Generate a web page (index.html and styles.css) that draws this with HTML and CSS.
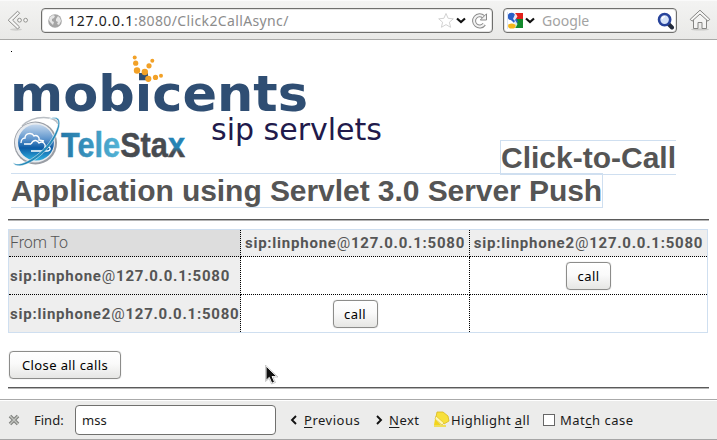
FILE: index.html
```html
<!DOCTYPE html>
<html lang="en">
<head>
<meta charset="utf-8">
<title>Click2CallAsync</title>
<link rel="stylesheet" href="styles.css">
</head>
<body>
<header class="toolbar">
  <svg class="back" width="22" height="22" viewBox="0 0 22 22">
    <ellipse cx="9" cy="19.5" rx="6" ry="1.2" fill="#cfcfcd"/>
    <path d="M10.6 1.2 12.6 3.2 5.6 10.2 12.6 17 10.6 19 1.2 10.2Z" fill="#f6f6f5" stroke="#8c8c8a" stroke-linejoin="round"/>
    <circle cx="12.5" cy="10.2" r="1.9" fill="#f6f6f5" stroke="#92928f"/>
    <circle cx="18.6" cy="10.2" r="1.9" fill="#f6f6f5" stroke="#92928f"/>
  </svg>
  <div class="field address">
    <svg width="14" height="14" viewBox="0 0 14 14">
      <circle cx="7" cy="7" r="6.8" fill="#a5a5a5"/>
      <path d="M2 3 5 1 7 2 6 4 4 5 4 7 6 8 5 11 2 8 1 6ZM8 5 10 2 12 4 13 7 11 11 9 10 10 8 8 7Z" fill="#e6e6e6"/>
    </svg>
    <span class="url"><b>127.0.0.1</b>:8080/Click2CallAsync/</span>
    <svg class="tools" width="52" height="18" viewBox="0 0 52 18">
      <path d="M8 1.5 10.1 6.3 15.3 6.8 11.4 10.2 12.6 15.3 8 12.6 3.4 15.3 4.6 10.2 .7 6.8 5.9 6.3Z" fill="#fff" stroke="#d2d2d2"/>
      <path d="M19 6.5 23 10 27 6.5" fill="none" stroke="#111" stroke-width="2.2"/>
      <path d="M46.2 12.2A5.6 5.6 0 1 1 45.5 4.8" fill="none" stroke="#8b8b8b" stroke-width="4"/>
      <path d="M46.2 12.2A5.6 5.6 0 1 1 45.5 4.8" fill="none" stroke="#f3f3f3" stroke-width="2"/>
      <path d="M48.5 1.8V8H42.3Z" fill="#f3f3f3" stroke="#8b8b8b"/>
    </svg>
  </div>
  <div class="field search">
    <svg width="30" height="18" viewBox="0 0 30 18">
      <path d="M8 1h8v6H8Z" fill="#e1201b"/>
      <path d="M8 7h8v9H8Z" fill="#12892c"/>
      <circle cx="4.5" cy="4.5" r="3.8" fill="#2b5fc6"/>
      <path d="M0 0h1v17H0Z" fill="#dbe5f6"/>
      <path d="M4 8 9 6 11 10 8 12Z" fill="#2b5fc6"/>
      <path d="M8.500 1 10.500 4.500 8 8 10.500 12 8.500 16 6 12 8 9 6 7Z" fill="#fff" opacity=".85"/>
      <ellipse cx="4.8" cy="14" rx="3.8" ry="2.6" fill="#f4b61b"/>
      <path d="M19 6.500 23 10 27 6.500" fill="none" stroke="#111" stroke-width="2.200"/>
    </svg>
    <span class="hint">Google</span>
    <svg class="lens" width="18" height="18" viewBox="0 0 18 18">
      <path d="M11 11.5 15 15.5" stroke="#222a3a" stroke-width="4" stroke-linecap="round"/>
      <circle cx="7.6" cy="7.6" r="5.6" fill="#d5e2f8" stroke="#27439b" stroke-width="2.6"/>
      <path d="M5 7A3 3 0 0 1 8 4.6" fill="none" stroke="#fff" stroke-width="1.4"/>
    </svg>
  </div>
  <svg class="home" width="22" height="22" viewBox="0 0 22 22">
    <ellipse cx="11" cy="20.5" rx="9" ry="1" fill="#c9c9c7"/>
    <path d="M4.5 10V19.5H9V13.5H13V19.5H17.5V10L11 4Z" fill="#f4f4f3" stroke="#858583"/>
    <path d="M11 1.2 20.8 10.3 19 12.2 11 5 3 12.2 1.2 10.3Z" fill="#f6f6f5" stroke="#858583" stroke-linejoin="round"/>
  </svg>
</header>

<main class="page">
  <h1 class="title"><svg class="logos" width="489" height="123" viewBox="11 45 489 123">
      <defs>
        <linearGradient id="tele" gradientUnits="userSpaceOnUse" x1="61" y1="0" x2="121" y2="0"><stop offset="0" stop-color="#2377a8"/><stop offset="1" stop-color="#54b4d6"/></linearGradient>
        <linearGradient id="ex" gradientUnits="userSpaceOnUse" x1="0" y1="138" x2="0" y2="157"><stop offset=".5" stop-color="#2583b4"/><stop offset=".75" stop-color="#474b50"/></linearGradient>
        <linearGradient id="globe" x1="0" y1="0" x2="0" y2="1"><stop offset="0" stop-color="#c5d8ed"/><stop offset=".4" stop-color="#6096cd"/><stop offset=".65" stop-color="#0c5ca6"/><stop offset="1" stop-color="#30b0df"/></linearGradient>
      </defs>
      <path d="M11 51h1v1h-1Z" fill="#000"/>
      <text class="mobicents" x="10" y="111" textLength="298" lengthAdjust="spacingAndGlyphs">mobicents</text>
      <g fill="#f2a127">
        <circle cx="134.7" cy="57.5" r="2"/><circle cx="135.7" cy="63.2" r="2.6"/><circle cx="137" cy="70.5" r="3.2"/>
        <circle cx="152.3" cy="60.8" r="2"/><circle cx="149" cy="65.8" r="2.6"/><circle cx="144.8" cy="72" r="3.2"/>
        <circle cx="148.3" cy="78.8" r="3.1"/><circle cx="155.5" cy="77.4" r="2.6"/><circle cx="161" cy="75.8" r="2"/>
      </g>
      <path d="M22 126C34 114 56 116 58 124" fill="none" stroke="#b9bec4" stroke-width="1.5"/>
      <circle cx="35.500" cy="143" r="21.500" fill="#999da4"/>
      <circle cx="35" cy="142.500" r="20" fill="#e8ebef"/>
      <circle cx="36" cy="142.500" r="18" fill="url(#globe)"/>
      <path d="M21 143C21 138 25 138 25 138 25 133 32 132 34 136 37 134 40 138 39 140L44 141M31 144C34 138 38 141 39 143 43 140 46 145 45 147 52 146 51 151 47 151H31M24 144H31" fill="none" stroke="#fff" stroke-width="1.4"/>
      <path d="M13 162C18 170 45 154 55 133 61 120 58 117 49 119 63 113 61 126 56 136 45 159 16 173 13 162Z" fill="#2389b8" stroke="#fff" stroke-width=".5"/>
      <text class="telestax" x="61" y="157" textLength="124" lengthAdjust="spacingAndGlyphs"><tspan class="tele">Tele</tspan>Sta<tspan class="ex">x</tspan></text>
      <text class="servlets" x="211" y="140" textLength="171" lengthAdjust="spacingAndGlyphs">sip servlets</text>
    </svg><span class="boxed first">Click-to-Call</span> <span class="boxed last">Application using Servlet 3.0 Server Push</span></h1>
  <div class="rule"></div>
  <table class="calls">
    <tr><td class="corner">From To</td><th>sip:linphone<i>@</i>127.0.0.1:5080</th><th>sip:linphone2<i>@</i>127.0.0.1:5080</th></tr>
    <tr><th class="from">sip:linphone<i>@</i>127.0.0.1:5080</th><td></td><td><button class="btn">call</button></td></tr>
    <tr><th class="from">sip:linphone2<i>@</i>127.0.0.1:5080</th><td><button class="btn">call</button></td><td></td></tr>
  </table>
  <button class="btn close-all">Close all calls</button>
  <div class="rule"></div>
  <svg class="cursor" width="14" height="20" viewBox="0 0 14 20">
    <path d="M1 1V15.5L4.3 12.4 6.8 18.3 9.6 17.1 7.1 11.5H11.8Z" fill="#111" stroke="#fff"/>
    <path d="M.5 0V16.5L4 13.5 6.5 19 10.5 17.5 8 12H13Z" fill="none" stroke="#aaa" stroke-width=".6"/>
  </svg>
</main>

<footer class="findbar">
  <svg class="x" width="12" height="12" viewBox="0 0 12 12">
    <path d="M2 2 10 10M10 2 2 10" stroke="#80827e" stroke-width="3.6"/>
    <path d="M2 2 10 10M10 2 2 10" stroke="#c2c4c0" stroke-width="1.4"/>
  </svg>
  <span class="find-label">Find:</span>
  <div class="find-input"><span>mss</span></div>
  <svg class="chev" width="8" height="12" viewBox="0 0 8 12"><path d="M6 2 2 6 6 10" fill="none" stroke="#111" stroke-width="1.9"/></svg>
  <span class="prev"><u>P</u>revious</span>
  <svg class="chev next-chev" width="8" height="12" viewBox="0 0 8 12"><path d="M2 2 6 6 2 10" fill="none" stroke="#111" stroke-width="1.9"/></svg>
  <span class="next"><u>N</u>ext</span>
  <svg class="marker" width="17" height="17" viewBox="0 0 17 17">
    <path d="M4 1 10 1 15 5 16 10 11 13 3 6Z" fill="#f7e03c" stroke="#d9b91c" stroke-width=".8"/>
    <path d="M3 5 11 12 9 14 2 8Z" fill="#fff7b5" stroke="#dfc02a" stroke-width=".7"/>
    <path d="M2 8 8 14 1 14Z" fill="#f3d51c"/><path d="M1 15H13" stroke="#f2dc38" stroke-width="1.6"/>
  </svg>
  <span class="hl">Highlight <u>a</u>ll</span>
  <span class="check"></span>
  <span class="match">Mat<u>c</u>h case</span>
</footer>
</body>
</html>
```

FILE: styles.css
```css
* { box-sizing: border-box; }
body {
  margin: 0;
  width: 717px;
  height: 440px;
  overflow: hidden;
  display: flex;
  flex-direction: column;
  background: #fff;
  color: #1a1a1a;
  font: 14px/20px "Noto Sans", "Open Sans", sans-serif;
}
svg { flex: none; }

.toolbar {
  display: flex;
  align-items: flex-start;
  height: 40px;
  padding: 8px 0 0 7px;
  background: linear-gradient(#f3f3f2, #e9e9e7);
  border-bottom: 1px solid #a9a9a7;
  border-top: 1px solid #fafafa;
}
.field {
  display: flex;
  align-items: center;
  height: 25px;
  margin-top: -1px;
  background: #fff;
  border: 1px solid #6f6f6d;
  border-radius: 4px;
  box-shadow: inset 0 0 0 1px #e4e4e3;
}
.back { margin-top: 1px; }
.address { width: 452px; margin-left: 12px; padding-left: 6px; }
.url { margin-left: 6px; padding-top: 1px; color: #8c8c8c; letter-spacing: .37px; white-space: nowrap; }
.url b { font-weight: 400; color: #1c1c1c; letter-spacing: .75px; }
.tools { margin-left: auto; margin-right: 2px; }
.search { width: 174px; margin-left: 10px; padding-left: 3px; }
.hint { margin-left: 5px; padding-top: 1px; color: #a3a3a3; }
.lens { margin-left: auto; margin-right: 1px; }
.home { margin-left: 12px; }

.page { position: relative; height: 359px; padding: 5px 8px 0; }
.title {
  margin: 0 0 0 3px;
  color: #555;
  font: bold 30px/33px "Liberation Sans", Arial, sans-serif;
}
.logos { vertical-align: baseline; }
.boxed { border: 1px solid #cfdff0; }
.first { border-right: 0; }
.last { border-left: 0; letter-spacing: -.06px; }
.mobicents { font: bold 50px "DejaVu Sans", sans-serif; fill: #2f4e73; }
.telestax { font: bold 35px "Liberation Sans", sans-serif; fill: #474b50; stroke: #474b50; stroke-width: .5px; }
.tele { fill: url(#tele); stroke: url(#tele); }
.ex { fill: url(#ex); stroke: url(#ex); }
.servlets { font: 30px "DejaVu Sans", sans-serif; fill: #211a4b; }

.rule { height: 2px; margin-top: 12px; background: #5a5a5a; border-bottom: 1px solid #b5b5b5; }
.calls {
  table-layout: fixed;
  width: 700px;
  margin-top: 8px;
  border: 1px solid #cfdff0;
  border-collapse: separate;
  border-spacing: 0;
  color: #555;
  font: 15px/20px Roboto, sans-serif;
}
.calls td, .calls th {
  height: 38px;
  padding: 0;
  text-align: center;
  border: 0 dotted #000;
  border-width: 0 1px 1px 0;
  white-space: nowrap;
}
.calls th { background: #eee; letter-spacing: .77px; }
.calls th i { font-style: normal; font-weight: 400; }
.calls tr:first-child > * { height: 27px; width: 229px; }
.calls tr:first-child > .corner { width: 232px; padding-left: 1px; background: #ddd; text-align: left; font-size: 16px; font-weight: 300; letter-spacing: -.1px; }
.calls .from { padding-left: 1px; text-align: left; }
.calls tr > :last-child { border-right: 0; }
.calls tr:first-child > :last-child { width: auto; padding-right: 8px; text-align: center; }
.calls tr:first-child > :last-child { padding-right: 0; }
.calls tr:last-child > * { border-bottom: 0; height: 37px; }

.btn {
  display: block;
  width: 45px;
  height: 28px;
  margin: 1px auto 0;
  padding: 0;
  color: #000;
  font: 13px/24px "Noto Sans", sans-serif;
  letter-spacing: .4px;
  background: linear-gradient(#fff, #fafafa 45%, #e6e6e4);
  border: 1px solid #8c8c8a;
  border-radius: 4px;
  box-shadow: 0 0 1px #aaa;
}
.close-all { width: 112px; margin: 18px 0 0 1px; }
.close-all + .rule { margin-top: 8px; }
.cursor { position: absolute; left: 265px; top: 325px; }

.findbar {
  display: flex;
  align-items: center;
  height: 41px;
  padding-left: 8px;
  background: #ececeb;
  border-top: 1px solid #aaa;
  border-bottom: 1px solid #a6a6a6;
  box-shadow: inset 0 1px #fff;
  white-space: nowrap;
  font-size: 13px;
}
.findbar u { text-underline-offset: 2px; }
.find-label { width: 41px; margin-left: 14px; }
.find-input {
  width: 201px;
  height: 30px;
  padding: 4px 6px;
  background: #fff;
  border: 1px solid #70706e;
  border-radius: 4px;
}
.chev { margin-left: 14px; }
.prev, .next, .hl, .match { letter-spacing: .5px; }
.prev { width: 56px; margin-left: 6px; }
.next-chev { margin-left: 15px; }
.next { width: 34px; margin-left: 6px; }
.marker { margin-left: 10px; }
.hl { width: 78px; margin-left: 1px; letter-spacing: .4px; }
.check { width: 12px; height: 12px; margin-left: 14px; background: #fff; border: 1px solid #666; }
.match { margin-left: 5px; }
```
